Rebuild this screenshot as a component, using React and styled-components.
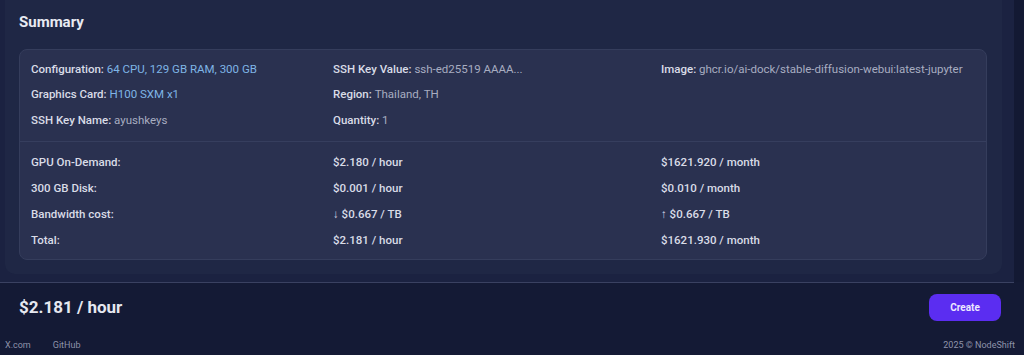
import React from "react";
import styled, { createGlobalStyle } from "styled-components";

const GlobalStyle = createGlobalStyle`
  body {
    margin: 0;
    background: #141a35;
    font-family: Roboto, "Liberation Sans", sans-serif;
    -webkit-font-smoothing: antialiased;
  }
`;

const Page = styled.div`
  display: flex;
  flex-direction: column;
  height: 355px;
  overflow: hidden;
`;

const Main = styled.div`
  display: flex;
`;

const ScrollArea = styled.div`
  flex: 1;
  background: #1b2241;
  padding: 0 12px 8px 5px;
`;

const ScrollTrack = styled.div`
  width: 10px;
  background: #131933;
`;

const Panel = styled.section`
  background: #1f2745;
  border-radius: 0 0 10px 10px;
  padding: 10px 15px 14px 14px;
`;

const Heading = styled.h2`
  margin: 0 0 15px;
  font-size: 15px;
  line-height: 24px;
  font-weight: 700;
  color: #e8eaf2;
`;

const Card = styled.div`
  background: #2a3150;
  border: 1px solid #353d5c;
  border-radius: 8px;
`;

const Section = styled.div`
  display: grid;
  grid-template-columns: 302px 328px 1fr;
  grid-auto-rows: ${(p) => p.rowHeight}px;
  align-items: center;
  padding: ${(p) => p.padTop}px 11px ${(p) => p.padBottom}px;
  & + & {
    border-top: 1px solid #363e5e;
  }
`;

const Cell = styled.div`
  font-size: 11.5px;
  color: #d9dce7;
  font-weight: 500;
  white-space: nowrap;
`;

const Value = styled.span`
  font-weight: 400;
  color: ${(p) => (p.accent ? "#7fb5e6" : "#a8adc1")};
`;

const Footer = styled.footer`
  display: flex;
  align-items: center;
  justify-content: space-between;
  border-top: 1px solid #3a4161;
  margin-right: 10px;
  padding: 11px 13px 11px 19px;
`;

const Price = styled.div`
  font-size: 17px;
  font-weight: 700;
  color: #e6e8f0;
`;

const CreateButton = styled.button`
  width: 72px;
  height: 27px;
  border: none;
  border-radius: 8px;
  background: #5b2df1;
  color: #ece8ff;
  font-family: inherit;
  font-size: 10px;
  font-weight: 700;
  cursor: pointer;
`;

const BottomBar = styled.div`
  display: flex;
  align-items: center;
  justify-content: space-between;
  padding: 8px 9px 0 5px;
  font-size: 9px;
  color: #8e93aa;
`;

const Links = styled.div`
  display: flex;
  gap: 22px;
`;

const specs = [
  [
    ["Configuration", "64 CPU, 129 GB RAM, 300 GB", true],
    ["SSH Key Value", "ssh-ed25519 AAAA..."],
    ["Image", "ghcr.io/ai-dock/stable-diffusion-webui:latest-jupyter"],
  ],
  [
    ["Graphics Card", "H100 SXM x1", true],
    ["Region", "Thailand, TH"],
    null,
  ],
  [
    ["SSH Key Name", "ayushkeys"],
    ["Quantity", "1"],
    null,
  ],
];

const costs = [
  ["GPU On-Demand:", "$2.180 / hour", "$1621.920 / month"],
  ["300 GB Disk:", "$0.001 / hour", "$0.010 / month"],
  ["Bandwidth cost:", "↓ $0.667 / TB", "↑ $0.667 / TB"],
  ["Total:", "$2.181 / hour", "$1621.930 / month"],
];

export default function App() {
  return (
    <Page>
      <GlobalStyle />
      <Main>
        <ScrollArea>
          <Panel>
            <Heading>Summary</Heading>
            <Card>
              <Section padTop={6} padBottom={8} rowHeight={25.5}>
                {specs.flat().map((item, i) =>
                  item ? (
                    <Cell key={i}>
                      {item[0]}: <Value accent={item[2]}>{item[1]}</Value>
                    </Cell>
                  ) : (
                    <Cell key={i} />
                  )
                )}
              </Section>
              <Section padTop={7} padBottom={6} rowHeight={26}>
                {costs.flat().map((text, i) => (
                  <Cell key={i}>{text}</Cell>
                ))}
              </Section>
            </Card>
          </Panel>
        </ScrollArea>
        <ScrollTrack />
      </Main>
      <Footer>
        <Price>$2.181 / hour</Price>
        <CreateButton>Create</CreateButton>
      </Footer>
      <BottomBar>
        <Links>
          <span>X.com</span>
          <span>GitHub</span>
        </Links>
        <span>2025 © NodeShift</span>
      </BottomBar>
    </Page>
  );
}
